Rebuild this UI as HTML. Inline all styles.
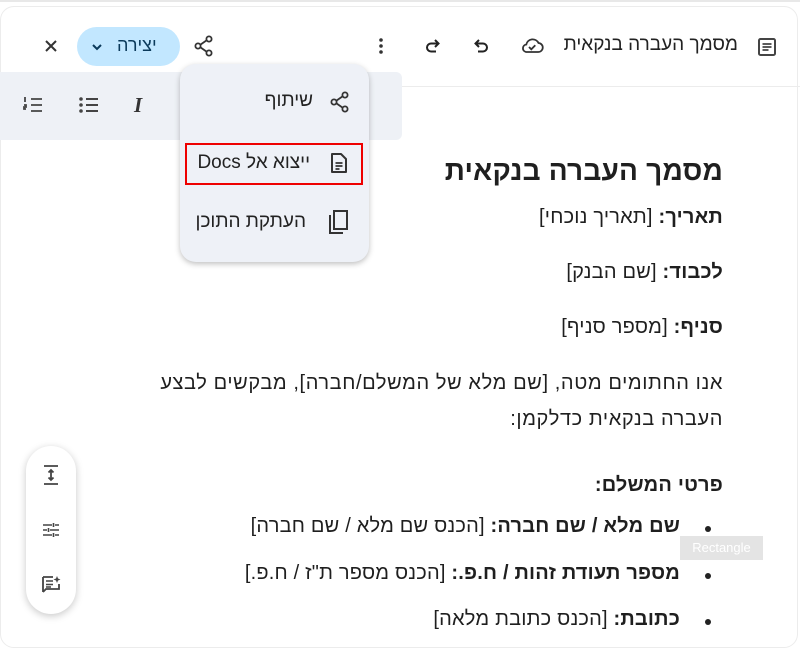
<!DOCTYPE html>
<html><head><meta charset="utf-8"><style>
body{margin:0;width:800px;height:632px;overflow:hidden;background:#fff;font-family:"Liberation Sans","Noto Sans CJK SC",sans-serif;color:#1f1f1f;position:relative}
.abs{position:absolute}
.t{position:absolute;right:77px;direction:rtl;font-size:20px;letter-spacing:0.2px;white-space:nowrap;color:#1f1f1f}
svg{position:absolute}
</style></head><body>
<div class="abs" style="left:0;top:0;width:800px;height:2px;background:#e8e8e8"></div>
<div class="abs" style="left:0;top:6px;width:796px;height:640px;border:1px solid #ececec;border-radius:14px;background:#fff"></div>
<div class="abs" style="left:400px;top:86px;width:400px;height:1px;background:#ececec"></div>
<div class="abs" style="left:0;top:72px;width:402px;height:68px;background:#eef1f6;border-radius:0 6px 6px 0"></div>

<!-- top bar -->
<svg style="left:757px;top:37px" width="20" height="20" viewBox="0 0 20 20"><rect x="2" y="2" width="16" height="16" rx="1.5" fill="none" stroke="#444" stroke-width="2"/><path d="M5.5 7h9M5.5 10h9M5.5 13h6" stroke="#444" stroke-width="1.8"/></svg>
<div class="abs" style="right:62px;top:34px;direction:rtl;font-size:19px;color:#222">מסמך העברה בנקאית</div>
<svg style="left:519px;top:36px" width="26" height="20" viewBox="0 0 26 20"><path d="M7 16h12a4.5 4.5 0 0 0 .5-9A6.5 6.5 0 0 0 7.3 8.5 3.8 3.8 0 0 0 7 16z" fill="none" stroke="#333" stroke-width="1.8"/><path d="M10 11l2.3 2.3 4-4" fill="none" stroke="#333" stroke-width="1.8"/></svg>
<svg style="left:473px;top:38px" width="18" height="16" viewBox="0 0 18 16"><path d="M6 2L2.5 5.5 6 9M3 5.5h7a4 4 0 0 1 0 8H5" fill="none" stroke="#222" stroke-width="2"/></svg>
<svg style="left:423px;top:38px" width="18" height="16" viewBox="0 0 18 16"><path d="M12 2l3.5 3.5L12 9M15 5.5H8a4 4 0 0 0 0 8h5" fill="none" stroke="#222" stroke-width="2"/></svg>
<svg style="left:376px;top:36px" width="10" height="20" viewBox="0 0 10 20"><circle cx="5" cy="4" r="1.8" fill="#333"/><circle cx="5" cy="10" r="1.8" fill="#333"/><circle cx="5" cy="16" r="1.8" fill="#333"/></svg>
<svg style="left:192px;top:34px" width="24" height="24" viewBox="0 0 24 24"><circle cx="17" cy="5" r="2.6" fill="none" stroke="#333" stroke-width="1.8"/><circle cx="6" cy="12" r="2.6" fill="none" stroke="#333" stroke-width="1.8"/><circle cx="17" cy="19" r="2.6" fill="none" stroke="#333" stroke-width="1.8"/><path d="M8.3 10.7l6.4-4.4M8.3 13.3l6.4 4.4" stroke="#333" stroke-width="1.8"/></svg>
<div class="abs" style="left:77px;top:27px;width:103px;height:39px;border-radius:20px;background:#c2e7ff"></div>
<div class="abs" style="left:117px;top:35px;direction:rtl;font-size:18px;color:#0b3a5b">יצירה</div>
<svg style="left:91px;top:43px" width="12" height="8" viewBox="0 0 12 8"><path d="M2 2l4 4 4-4" fill="none" stroke="#0b3a5b" stroke-width="2"/></svg>
<svg style="left:43px;top:38px" width="16" height="16" viewBox="0 0 16 16"><path d="M3 3l10 10M13 3L3 13" stroke="#333" stroke-width="2"/></svg>

<!-- formatting toolbar -->
<svg style="left:22px;top:95px" width="22" height="20" viewBox="0 0 22 20"><path d="M3 2v5M2 10h2v2H2v2h2M9 4h11M9 10h11M9 16h11" stroke="#444" stroke-width="1.8" fill="none"/></svg>
<svg style="left:78px;top:96px" width="22" height="18" viewBox="0 0 22 18"><circle cx="3" cy="3" r="1.8" fill="#444"/><circle cx="3" cy="9" r="1.8" fill="#444"/><circle cx="3" cy="15" r="1.8" fill="#444"/><path d="M8 3h12M8 9h12M8 15h12" stroke="#444" stroke-width="2"/></svg>
<div class="abs" style="left:134px;top:93px;font-size:21px;font-style:italic;font-weight:bold;color:#333;font-family:'Liberation Serif',serif">I</div>

<!-- menu -->
<div class="abs" style="left:180px;top:64px;width:189px;height:198px;border-radius:16px;background:#eef1f7;box-shadow:0 2px 6px rgba(0,0,0,.25)"></div>
<svg style="left:328px;top:90px" width="24" height="24" viewBox="0 0 24 24"><circle cx="17" cy="5" r="2.6" fill="none" stroke="#333" stroke-width="1.8"/><circle cx="6" cy="12" r="2.6" fill="none" stroke="#333" stroke-width="1.8"/><circle cx="17" cy="19" r="2.6" fill="none" stroke="#333" stroke-width="1.8"/><path d="M8.3 10.7l6.4-4.4M8.3 13.3l6.4 4.4" stroke="#333" stroke-width="1.8"/></svg>
<div class="abs" style="right:487px;top:90px;direction:rtl;font-size:19px;color:#222">שיתוף</div>
<div class="abs" style="left:185px;top:143px;width:178px;height:42px;border:2px solid #e00;box-sizing:border-box"></div>
<svg style="left:329px;top:151px" width="20" height="24" viewBox="0 0 20 24"><path d="M3 3h9l5 5v13H3z" fill="none" stroke="#333" stroke-width="2" stroke-linejoin="round"/><path d="M6.5 12h7M6.5 15h7M6.5 18h4" stroke="#333" stroke-width="1.8"/></svg>
<div class="abs" style="right:490px;top:152px;direction:rtl;font-size:19px;color:#222">ייצוא אל Docs</div>
<svg style="left:326px;top:208px" width="24" height="28" viewBox="0 0 24 28"><path d="M8 3h13v18H8z" fill="none" stroke="#333" stroke-width="2"/><path d="M4 7v18h13" fill="none" stroke="#333" stroke-width="2"/></svg>
<div class="abs" style="right:494px;top:211px;direction:rtl;font-size:19px;color:#222">העתקת התוכן</div>

<!-- document -->
<div class="t" style="top:155px;font-size:28px;font-weight:bold;letter-spacing:0.2px">מסמך העברה בנקאית</div>
<div class="t" style="top:206px"><b>תאריך:</b> [תאריך נוכחי]</div>
<div class="t" style="top:261px"><b>לכבוד:</b> [שם הבנק]</div>
<div class="t" style="top:316px"><b>סניף:</b> [מספר סניף]</div>
<div class="t" style="top:372px;letter-spacing:0.6px">אנו החתומים מטה, [שם מלא של המשלם/חברה], מבקשים לבצע</div>
<div class="t" style="top:408px;letter-spacing:0.6px">העברה בנקאית כדלקמן:</div>
<div class="t" style="top:474px"><b>פרטי המשלם:</b></div>
<div class="t" style="top:515px;right:120px"><b>שם מלא / שם חברה:</b> [הכנס שם מלא / שם חברה]</div>
<div class="t" style="top:562px;right:120px"><b>מספר תעודת זהות / ח.פ.:</b> [הכנס מספר ת"ז / ח.פ.]</div>
<div class="t" style="top:608px;right:120px"><b>כתובת:</b> [הכנס כתובת מלאה]</div>
<div class="abs" style="left:705px;top:526px;width:6px;height:6px;border-radius:3px;background:#222"></div>
<div class="abs" style="left:705px;top:573px;width:6px;height:6px;border-radius:3px;background:#222"></div>
<div class="abs" style="left:705px;top:619px;width:6px;height:6px;border-radius:3px;background:#222"></div>
<div class="abs" style="left:680px;top:536px;width:83px;height:24px;background:#e4e4e4;color:#fff;font-size:13px;line-height:24px;text-align:center">Rectangle</div>

<!-- side pill -->
<div class="abs" style="left:26px;top:446px;width:50px;height:168px;border-radius:25px;background:#fff;box-shadow:0 2px 8px rgba(0,0,0,.22)"></div>
<svg style="left:41px;top:464px" width="20" height="22" viewBox="0 0 20 22"><path d="M3 2h14M3 20h14M10 6v10M7.5 8.5L10 6l2.5 2.5M7.5 13.5L10 16l2.5-2.5" fill="none" stroke="#444" stroke-width="1.8"/></svg>
<svg style="left:41px;top:520px" width="20" height="20" viewBox="0 0 20 20"><path d="M2 5h9M14 5h4M2 10h4M9 10h9M2 15h9M14 15h4M12.5 3v4M7.5 8v4M12.5 13v4" stroke="#444" stroke-width="1.6"/></svg>
<svg style="left:40px;top:574px" width="22" height="22" viewBox="0 0 22 22"><path d="M3 3h10M3 18V3M3 18l3-3h13v-5" fill="none" stroke="#444" stroke-width="1.8"/><path d="M6 7h7M6 10.5h7M6 13h5" stroke="#444" stroke-width="1.6"/><path d="M17 2l1 2.5 2.5 1-2.5 1-1 2.5-1-2.5-2.5-1 2.5-1z" fill="#444"/></svg>
</body></html>
